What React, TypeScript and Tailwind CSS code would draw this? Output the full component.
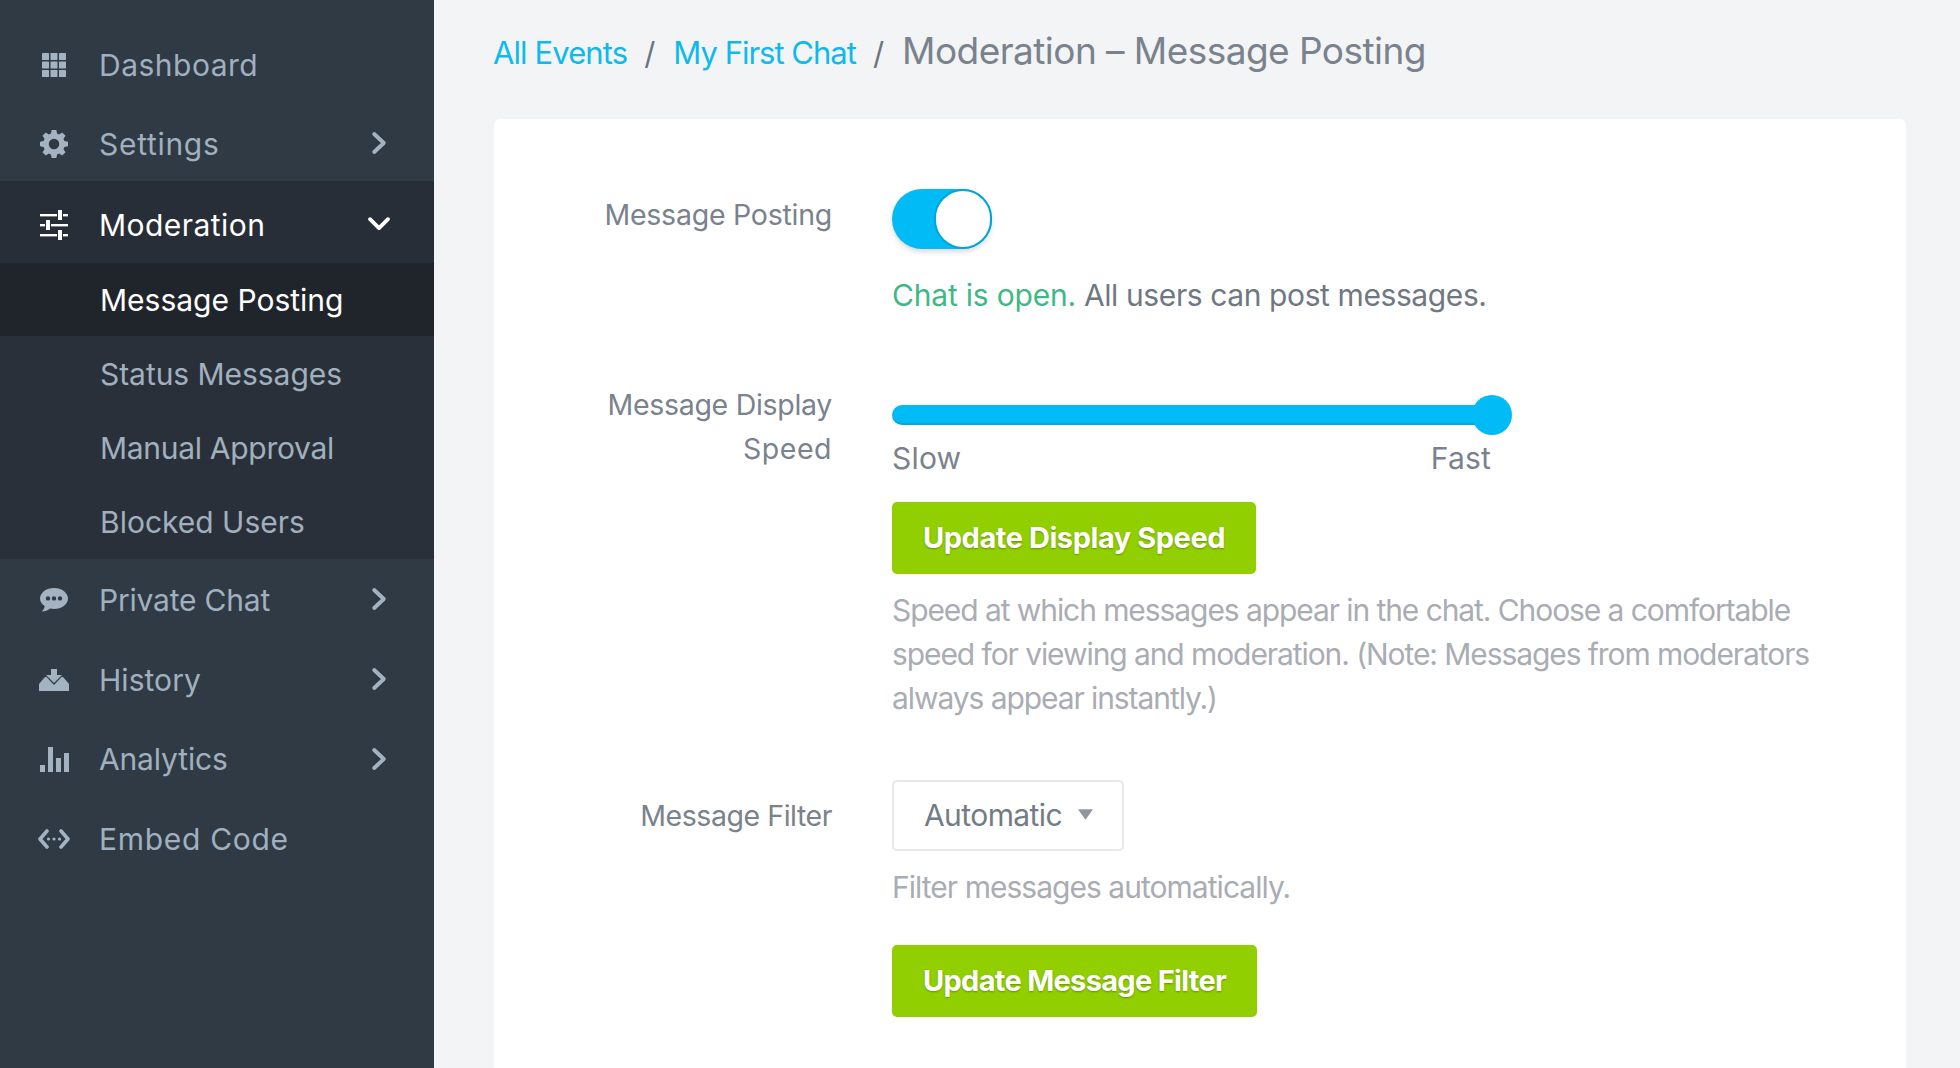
import React from "react"

const font = { fontFamily: "Inter, 'Liberation Sans', sans-serif" }

function Chevron({ down, light }: { down?: boolean; light?: boolean }) {
  return (
    <svg viewBox="0 0 20 20" className={`h-[24px] w-[24px] ${light ? "text-white" : "text-[#a3b3c2]"}`} fill="none" stroke="currentColor" strokeWidth="3.200" strokeLinecap="round" strokeLinejoin="round">
      {down ? <path d="M2.500 6 10 13.500 17.500 6" /> : <path d="M6 2.500 14 10l-8 7.500" />}
    </svg>
  )
}

function GridIcon() {
  return (
    <svg viewBox="0 0 24 24" className="h-[24px] w-[24px]" fill="currentColor">
      {[0, 8.500, 17].map((y) => [0, 8.500, 17].map((x) => <rect key={`${x}-${y}`} x={x} y={y} width="7" height="7" rx="0.4" />))}
    </svg>
  )
}

function CogIcon() {
  return (
    <svg viewBox="0 0 24 24" className="h-[28px] w-[28px]" fill="currentColor">
      <path fillRule="evenodd" d="M10 1h4l.6 3.100 1.800.8L19 3.100 21.900 6l-1.800 2.600.8 1.800L24 11v4l-3.100.6-.8 1.800 1.800 2.600L19 22.900l-2.600-1.800-1.800.8L14 25h-4l-.6-3.100-1.800-.8L5 22.900 2.100 20l1.800-2.600-.8-1.800L0 15v-4l3.100-.6.8-1.800L2.100 6 5 3.100l2.600 1.800 1.800-.8z M12 8.500a4.500 4.500 0 1 0 0 9 4.500 4.500 0 0 0 0-9z" transform="translate(0 -1)" />
    </svg>
  )
}

function SlidersIcon() {
  return (
    <svg viewBox="0 0 28 30" className="h-[30px] w-[28px]" fill="currentColor">
      <rect x="0" y="4" width="17" height="2.400" />
      <rect x="23" y="4" width="5" height="2.400" />
      <rect x="18" y="0" width="4" height="10" />
      <rect x="0" y="14" width="5" height="2.400" />
      <rect x="11" y="14" width="17" height="2.400" />
      <rect x="6" y="10" width="4" height="10" />
      <rect x="0" y="24" width="17" height="2.400" />
      <rect x="23" y="24" width="5" height="2.400" />
      <rect x="18" y="20" width="4" height="10" />
    </svg>
  )
}

function ChatIcon() {
  return (
    <svg viewBox="0 0 28 24" className="h-[24px] w-[28px]" fill="currentColor">
      <path fillRule="evenodd" d="M14 0C6.300 0 0 4.700 0 10.500c0 3 1.800 5.700 4.700 7.500-.2 2-1.200 4-3 5.500 3.500 0 6.300-1.100 8.300-3 1.300.3 2.600.5 4 .5 7.700 0 14-4.700 14-10.500S21.700 0 14 0zM8 8.200a2.200 2.200 0 1 1 0 4.400 2.200 2.200 0 0 1 0-4.400zm6 0a2.200 2.200 0 1 1 0 4.400 2.200 2.200 0 0 1 0-4.400zm6 0a2.200 2.200 0 1 1 0 4.400 2.200 2.200 0 0 1 0-4.400z" />
    </svg>
  )
}

function InboxIcon() {
  return (
    <svg viewBox="0 0 30 22" className="h-[22px] w-[30px]" fill="currentColor">
      <path d="M12 0h6v6h5l-8 8-8-8h5z" />
      <path d="M6 8h1.500L15 16l7.500-8H24l6 7v7H0v-7z" />
    </svg>
  )
}

function BarsIcon() {
  return (
    <svg viewBox="0 0 29 25" className="h-[25px] w-[29px]" fill="currentColor">
      <rect x="0" y="18" width="5" height="7" />
      <rect x="8" y="0" width="5" height="25" />
      <rect x="16" y="11" width="5" height="14" />
      <rect x="24" y="6" width="5" height="19" />
    </svg>
  )
}

function CodeIcon() {
  return (
    <svg viewBox="0 0 32 20" className="h-[20px] w-[32px]" fill="none" stroke="currentColor" strokeWidth="3.600" strokeLinecap="round" strokeLinejoin="round">
      <path d="M9 2 2 10l7 8" />
      <path d="M23 2l7 8-7 8" />
      <g fill="currentColor" stroke="none">
        <circle cx="10.500" cy="10" r="1.600" />
        <circle cx="16" cy="10" r="1.600" />
        <circle cx="21.500" cy="10" r="1.600" />
      </g>
    </svg>
  )
}

function IconCell({ children }: { children: React.ReactNode }) {
  return (
    <div className="flex w-[99px] shrink-0 pl-[34px]">
      <div className="flex w-[40px] justify-center">{children}</div>
    </div>
  )
}

function NavRow({ icon, label, arrow, cls }: { icon: React.ReactNode; label: string; arrow?: boolean; cls: string }) {
  return (
    <div className={`flex items-center text-[30px] text-[#a0b0bf] ${cls}`}>
      <div className="text-[#a3b3c2]">
        <IconCell>{icon}</IconCell>
      </div>
      <span className="flex-1">{label}</span>
      {arrow && (
        <div className="mr-[43px] -mt-[2px]">
          <Chevron />
        </div>
      )}
    </div>
  )
}

function SubRow({ label, cls }: { label: string; cls: string }) {
  return <div className={`flex items-center pt-[2px] pl-[100px] text-[30px] ${cls}`}>{label}</div>
}

function GreenButton({ children, cls }: { children: React.ReactNode; cls: string }) {
  return (
    <button className={`block h-[72px] rounded-[5px] bg-[#92cf00] px-[31px] text-[29px] font-bold whitespace-nowrap text-white [text-shadow:0_1px_2px_rgba(0,0,0,0.3)] ${cls}`}>
      {children}
    </button>
  )
}

export default function App() {
  return (
    <div className="flex h-[1068px] w-[1960px] overflow-hidden bg-[#f2f4f6]" style={font}>
      <aside className="flex w-[434px] shrink-0 flex-col bg-[#2f3a45] pt-[25px]">
        <NavRow cls="h-[80px] tracking-[0.5px]" icon={<GridIcon />} label="Dashboard" />
        <NavRow cls="h-[76px] pt-[2px] tracking-[0.7px]" icon={<CogIcon />} label="Settings" arrow />

        <div className="flex h-[82px] items-center bg-[#282e37] pt-[6px] text-[30px] tracking-[0.45px] text-white">
          <IconCell>
            <SlidersIcon />
          </IconCell>
          <span className="flex-1">Moderation</span>
          <div className="mr-[43px] -mt-[2px]">
            <Chevron down light />
          </div>
        </div>
        <div className="h-[296px] bg-[#2a3039]">
          <SubRow cls="h-[73px] bg-[#20252b] text-white" label="Message Posting" />
          <SubRow cls="h-[74px] tracking-[-0.05px] text-[#a0b0bf]" label="Status Messages" />
          <SubRow cls="h-[74px] tracking-[-0.3px] text-[#a0b0bf]" label="Manual Approval" />
          <SubRow cls="h-[74px] text-[#a0b0bf]" label="Blocked Users" />
        </div>

        <NavRow cls="h-[80px] mt-[1px] tracking-[-0.2px]" icon={<ChatIcon />} label="Private Chat" arrow />
        <NavRow cls="h-[80px] tracking-[0.05px]" icon={<InboxIcon />} label="History" arrow />
        <NavRow cls="h-[79px] tracking-[-0.15px]" icon={<BarsIcon />} label="Analytics" arrow />
        <NavRow cls="h-[80px] tracking-[0.7px]" icon={<CodeIcon />} label="Embed Code" />
      </aside>

      <main className="min-w-0 flex-1 pl-[60px] pr-[54px]">
        <div className="-ml-[1px] flex h-[119px] items-start pt-[28px] whitespace-nowrap">
          <span className="mt-[2px] text-[31px] tracking-[-0.9px] text-[#0fb9ee]">All Events</span>
          <span className="mr-[18px] ml-[17px] mt-[3px] text-[31px] text-[#6d7680]">/</span>
          <span className="mt-[2px] text-[31px] tracking-[-1px] text-[#0fb9ee]">My First Chat</span>
          <span className="mr-[18px] ml-[17px] mt-[3px] text-[31px] text-[#6d7680]">/</span>
          <span className="-mt-[5px] text-[37px] tracking-[-0.55px] text-[#79828d]">Moderation – Message Posting</span>
        </div>

        <div className="h-[1000px] rounded-[6px] bg-white pt-[70px]">
          {/* Message posting */}
          <div className="flex">
            <div className="w-[338px] pt-[4px] text-right text-[28.500px] leading-[44px] tracking-[-0.25px] text-[#79828d]">Message Posting</div>
            <div className="ml-[60px]">
              <div className="flex h-[60px] w-[100px] justify-end rounded-full bg-[#00bbf5] shadow-[0_3px_5px_rgba(0,0,0,0.15)]">
                <div className="h-[60px] w-[58px] rounded-full border-[2px] border-[#00a5dc] bg-white" />
              </div>
              <p className="mt-[24px] text-[30px] leading-[44px] tracking-[-0.4px] whitespace-nowrap text-[#6f7882]">
                <span className="tracking-[-0.2px] text-[#3fb886]">Chat is open.</span> All users can post messages.
              </p>
            </div>
          </div>

          {/* Display speed */}
          <div className="mt-[66px] flex">
            <div className="w-[338px] text-right text-[28.500px] leading-[44px] tracking-[-0.3px] text-[#79828d]">
              Message Display
              <br />
              <span className="tracking-[0.5px]">Speed</span>
            </div>
            <div className="ml-[60px] pt-[12px]">
              <div className="relative h-[40px] w-[620px]">
                <div className="absolute top-[10px] left-0 h-[20px] w-[600px] rounded-full bg-[#00bbf5] shadow-[inset_0_-2px_1px_rgba(0,120,170,0.25)]" />
                <div className="absolute top-0 left-[580px] h-[40px] w-[40px] rounded-full bg-[#00bbf5]" />
              </div>
              <div className="mt-[1px] flex w-[599px] justify-between text-[30px] leading-[44px] tracking-[0.2px] text-[#79828d]">
                <span>Slow</span>
                <span>Fast</span>
              </div>
              <div className="mt-[22px]">
                <GreenButton cls="tracking-[-0.45px]">Update Display Speed</GreenButton>
              </div>
              <p className="mt-[14px] text-[30px] leading-[44px] tracking-[-1.08px] whitespace-nowrap text-[#a9adb3]">
                Speed at which messages appear in the chat. Choose a comfortable
                <br />
                speed for viewing and moderation. (Note: Messages from moderators
                <br />
                always appear instantly.)
              </p>
            </div>
          </div>

          {/* Message filter */}
          <div className="mt-[60px] flex">
            <div className="w-[338px] pt-[14px] text-right text-[28.500px] leading-[44px] tracking-[-0.45px] text-[#79828d]">Message Filter</div>
            <div className="ml-[60px]">
              <div className="flex h-[71px] w-[232px] items-center rounded-[5px] border-[2px] border-[#e6e8ea] pl-[30px] text-[30px] tracking-[-0.58px] text-[#737c86]">
                <span>Automatic</span>
                <svg viewBox="0 0 14 10" className="ml-[16px] -mt-[2px] h-[11px] w-[15px]" fill="#8f989f">
                  <path d="M0 0h14L7 10z" />
                </svg>
              </div>
              <p className="mt-[14px] text-[30px] leading-[44px] tracking-[-0.97px] whitespace-nowrap text-[#a9adb3]">Filter messages automatically.</p>
              <div className="mt-[36px]">
                <GreenButton cls="tracking-[-0.7px]">Update Message Filter</GreenButton>
              </div>
            </div>
          </div>
        </div>
      </main>
    </div>
  )
}
